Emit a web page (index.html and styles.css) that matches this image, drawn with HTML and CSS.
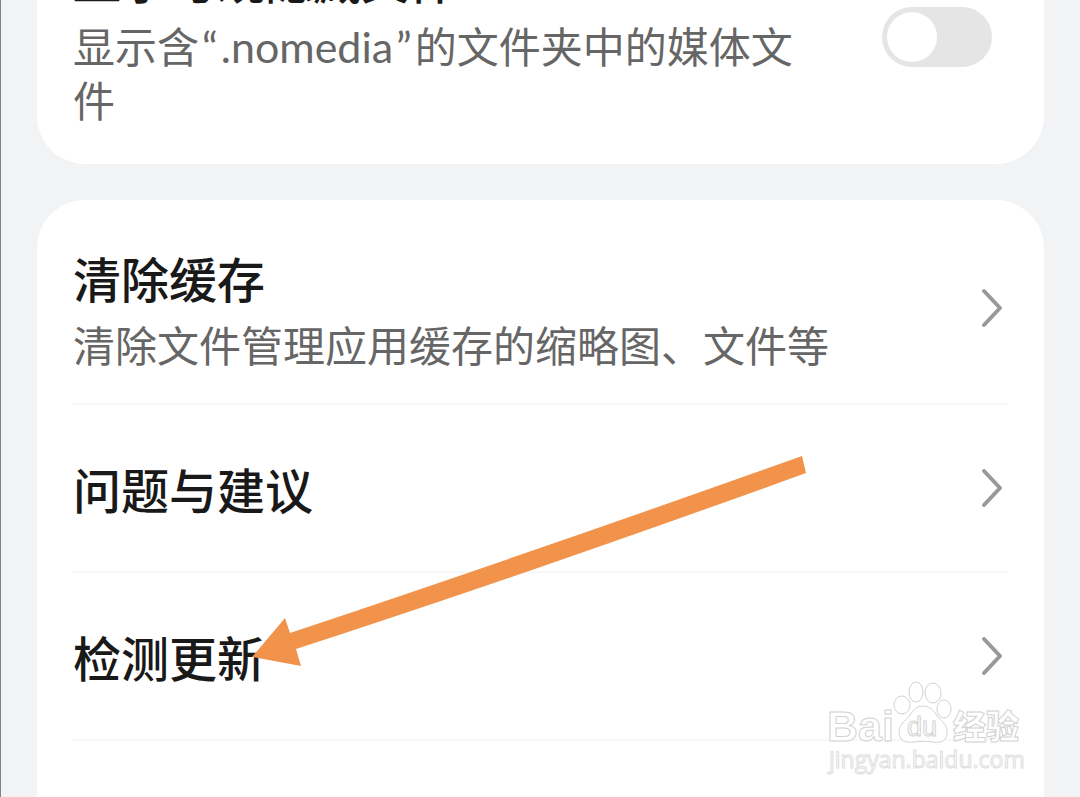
FILE: index.html
```html
<!DOCTYPE html>
<html lang="zh-CN">
<head>
<meta charset="utf-8">
<title>设置</title>
<link rel="stylesheet" href="styles.css">
</head>
<body>
<main class="screen">
  <section class="card card-scrolled">
    <div class="row row-toggle">
      <div class="texts">
        <label class="title" for="hidden-files">显示与观隐藏文件</label>
        <p class="note">显示含<span class="latin quote">“</span><span class="latin">.nomedia</span><span class="latin quote">”</span>的文件夹中的媒体文件</p>
      </div>
      <input class="switch" type="checkbox" role="switch" id="hidden-files">
    </div>
  </section>
  <section class="card card-links">
    <a class="row row-tall" href="#cache">
      <span class="texts">
        <span class="title">清除缓存</span>
        <span class="note">清除文件管理应用缓存的缩略图、文件等</span>
      </span>
      <svg class="chevron" viewBox="0 0 24 42" aria-hidden="true"><path d="M3 4 19 21 3 38"/></svg>
    </a>
    <a class="row" href="#feedback">
      <span class="title">问题与建议</span>
      <svg class="chevron" viewBox="0 0 24 42" aria-hidden="true"><path d="M3 4 19 21 3 38"/></svg>
    </a>
    <a class="row" href="#update">
      <span class="title">检测更新</span>
      <svg class="chevron" viewBox="0 0 24 42" aria-hidden="true"><path d="M3 4 19 21 3 38"/></svg>
    </a>
    <div class="row row-next"></div>
  </section>
  <svg class="arrow" viewBox="0 0 560 216" aria-hidden="true"><path d="M2 204 35 165 40 180Q280 100 552 3L556 20Q280 120 46 196L51 213Z" fill="#f2934b"/></svg>
  <div class="watermark">
    <svg viewBox="0 0 200 100" role="img" aria-label="Baidu 经验">
      <g fill="#fff" stroke="#d2d2d2" stroke-width="1">
        <text class="wm-brand" x="3" y="66">Bai</text>
        <ellipse cx="78" cy="30" rx="8" ry="9"/>
        <ellipse cx="92" cy="17" rx="7" ry="10"/>
        <ellipse cx="109" cy="18" rx="8" ry="10"/>
        <ellipse cx="120" cy="34" rx="7" ry="9"/>
        <path d="M99 31C106 31 110 36 114 42C119 47 124 51 123 59C122 67 115 68 109 67C101 66 97 66 90 67C82 68 75 66 75 57C75 50 81 46 86 40C90 34 93 31 99 31Z"/>
        <text class="wm-du" x="83" y="61">du</text>
        <text class="wm-cn" x="129" y="64">经验</text>
        <text class="wm-url" x="5" y="93">jingyan.baidu.com</text>
      </g>
    </svg>
  </div>
</main>
</body>
</html>
```
FILE: styles.css
```css
* {
  box-sizing: border-box;
}

body {
  margin: 0;
  background: #f2f3f5;
  font-family: "Noto Sans CJK SC", sans-serif;
}

.screen {
  position: relative;
  display: flex;
  flex-direction: column;
  gap: 36px;
  height: 100vh;
  padding: 0 36px;
  overflow: hidden;
  border-left: 1px solid #808080;
}

.card {
  flex: none;
  padding: 0 36px;
  border-radius: 48px;
  background: #fff;
}

.card-scrolled {
  margin-top: -102px;
  padding-top: 48px;
  padding-bottom: 38px;
}

.row {
  display: flex;
  align-items: center;
  justify-content: space-between;
  min-height: 168px;
  border-bottom: 2px solid #f7f7f7;
  color: inherit;
  text-decoration: none;
}

.row-toggle {
  border: 0;
}

.row-tall {
  min-height: 205px;
  padding-top: 12px;
}

.row-next {
  border: 0;
}

.texts {
  display: flex;
  flex-direction: column;
  max-width: 760px;
}

.title {
  color: #191919;
  font-size: 48px;
  font-weight: 500;
  line-height: 64px;
}

.note {
  max-width: 730px;
  margin: 8px 0 0;
  color: #666;
  font-size: 42px;
  line-height: 54px;
}

.row-tall .note {
  max-width: none;
}

.latin {
  font-family: Lato, sans-serif;
  font-size: 43px;
  line-height: 1;
}

.quote {
  padding: 0 3px;
}

.switch {
  flex: none;
  width: 110px;
  height: 60px;
  margin: 2px 16px 0 0;
  padding: 5px;
  border-radius: 30px;
  background: #e5e5e5;
  appearance: none;
}

.switch::before {
  display: block;
  width: 50px;
  height: 50px;
  border-radius: 50%;
  background: #fff;
  content: "";
}

.switch:checked::before {
  margin-left: auto;
}

.chevron {
  flex: none;
  width: 24px;
  height: 42px;
  margin-right: 3px;
  fill: none;
  stroke: #999;
  stroke-width: 4;
  stroke-linecap: round;
  stroke-linejoin: round;
}

.arrow {
  position: absolute;
  top: 453px;
  left: 249px;
  width: 560px;
  height: 216px;
}

.watermark {
  position: absolute;
  right: 56px;
  bottom: 22px;
  width: 200px;
  height: 100px;
}

.watermark svg {
  display: block;
  overflow: visible;
}

.wm-brand {
  font: 700 43px "Liberation Sans", sans-serif;
}

.wm-du {
  font: 400 27px "Liberation Sans", sans-serif;
}

.wm-cn {
  font: 900 33px "Noto Sans CJK SC", sans-serif;
}

.wm-url {
  font: 400 23px "Open Sans", sans-serif;
  stroke: #dedede;
}
```
